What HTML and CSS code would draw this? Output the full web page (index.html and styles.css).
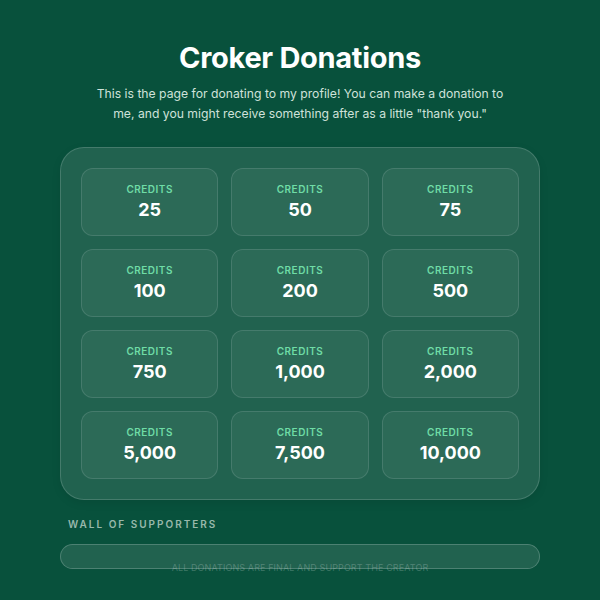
FILE: index.html
```html
<!DOCTYPE html>
<html lang="en">
<head>
<meta charset="utf-8">
<title>Croker Donations</title>
<link rel="stylesheet" href="styles.css">
</head>
<body>
<main class="page">
  <h1 class="title">Croker Donations</h1>
  <p class="intro">This is the page for donating to my profile! You can make a donation to<br>me, and you might receive something after as a little "thank you."</p>
  <section class="panel">
    <div class="grid">
      <div class="card"><span class="label">CREDITS</span><span class="amount">25</span></div>
      <div class="card"><span class="label">CREDITS</span><span class="amount">50</span></div>
      <div class="card"><span class="label">CREDITS</span><span class="amount">75</span></div>
      <div class="card"><span class="label">CREDITS</span><span class="amount">100</span></div>
      <div class="card"><span class="label">CREDITS</span><span class="amount">200</span></div>
      <div class="card"><span class="label">CREDITS</span><span class="amount">500</span></div>
      <div class="card"><span class="label">CREDITS</span><span class="amount">750</span></div>
      <div class="card"><span class="label">CREDITS</span><span class="amount">1,000</span></div>
      <div class="card"><span class="label">CREDITS</span><span class="amount">2,000</span></div>
      <div class="card"><span class="label">CREDITS</span><span class="amount">5,000</span></div>
      <div class="card"><span class="label">CREDITS</span><span class="amount">7,500</span></div>
      <div class="card"><span class="label">CREDITS</span><span class="amount">10,000</span></div>
    </div>
  </section>
  <h2 class="wall-title">WALL OF SUPPORTERS</h2>
  <div class="wall"></div>
  <p class="footer">ALL DONATIONS ARE FINAL AND SUPPORT THE CREATOR</p>
</main>
</body>
</html>
```

FILE: styles.css
```css
html, body {
  margin: 0;
  padding: 0;
  background: #08513c;
  height: 100%;
  overflow: hidden;
}
body {
  font-family: Inter, "Noto Sans", sans-serif;
  color: #ffffff;
}
.page {
  width: 480px;
  margin: 0 auto;
  padding-top: 40px;
  display: flex;
  flex-direction: column;
}
.title {
  margin: 0;
  font-size: 29px;
  line-height: 36px;
  font-weight: 700;
  text-align: center;
  letter-spacing: -0.3px;
}
.intro {
  margin: 8px 0 0;
  font-size: 12.2px;
  line-height: 20px;
  text-align: center;
  color: #cfe2da;
}
.panel {
  margin-top: 23px;
  padding: 20px;
  border: 1px solid rgba(255, 255, 255, 0.16);
  border-radius: 24px;
  background: rgba(255, 255, 255, 0.1);
  box-shadow: 0 3px 10px rgba(0, 0, 0, 0.08);
}
.grid {
  display: grid;
  grid-template-columns: repeat(3, 1fr);
  gap: 13px;
}
.card {
  height: 66px;
  padding-bottom: 2px;
  box-sizing: content-box;
  height: 64px;
  border: 1px solid rgba(255, 255, 255, 0.12);
  border-radius: 12px;
  background: rgba(255, 255, 255, 0.05);
  display: flex;
  flex-direction: column;
  align-items: center;
  justify-content: center;
}
.label {
  font-size: 10px;
  line-height: 14px;
  font-weight: 600;
  letter-spacing: 0.5px;
  color: #6fdca6;
}
.amount {
  margin-top: 3px;
  font-size: 18px;
  line-height: 22px;
  font-weight: 700;
  color: #ffffff;
}
.wall-title {
  margin: 17px 0 0;
  padding-left: 8px;
  font-size: 10px;
  line-height: 14px;
  font-weight: 600;
  letter-spacing: 2px;
  color: #98b8ab;
}
.wall {
  margin-top: 13px;
  height: 23px;
  border: 1px solid rgba(255, 255, 255, 0.2);
  border-radius: 13px;
  background: rgba(255, 255, 255, 0.1);
}
.footer {
  margin: -7px 0 0;
  font-size: 9px;
  line-height: 12px;
  text-align: center;
  color: rgba(255, 255, 255, 0.22);
  letter-spacing: 0.1px;
}
```
